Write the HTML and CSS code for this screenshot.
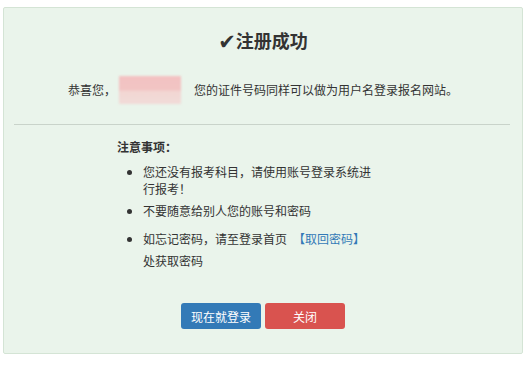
FILE: index.html
```html
<!DOCTYPE html>
<html lang="zh-CN">
<head>
    <meta charset="UTF-8">
    <meta name="viewport" content="width=device-width, initial-scale=1.0">
    <title>注册成功</title>
    <link rel="stylesheet" href="styles.css">
</head>
<body>
    <div class="panel">
        <h3 class="title"><span class="check">&#10004;</span>注册成功</h3>
        <p class="greet">
            恭喜您，<span class="name"></span>您的证件号码同样可以做为用户名登录报名网站。
        </p>
        <div class="line"></div>
        <div class="notes">
            <h4>注意事项：</h4>
            <ul>
                <li>您还没有报考科目，请使用账号登录系统进行报考！</li>
                <li>不要随意给别人您的账号和密码</li>
                <li class="last">如忘记密码，请至登录首页<a href="#" class="link">【取回密码】</a>处获取密码</li>
            </ul>
        </div>
        <div class="actions">
            <button class="btn blue">现在就登录</button>
            <button class="btn red">关闭</button>
        </div>
    </div>
</body>
</html>
```
FILE: styles.css
```css
body{
    margin:0;
    background:white;
    font-family:"Noto Sans CJK SC","DejaVu Sans",sans-serif;
    font-size:12px;
    color:#333;
}

.panel
{
    box-sizing:border-box;
    width:520px;
    height:347px;
    margin:7px 0 0 3px;
    background:#eaf4eb;
    border:1px solid #d4e4d5;
    border-radius:2px;
}

.title
{
    margin:20px 0 0;
    text-align:center;
    font-size:18px;
    line-height:24px;
    font-weight:bold;
    color:#333;
}

.check
{
    font-family:"DejaVu Sans",sans-serif;
    font-size:21px;
    vertical-align:-1px;
}

.greet
{
    margin:22px 0 0;
    text-align:center;
    line-height:28px;
    height:28px;
}

.name
{
    display:inline-block;
    vertical-align:top;
    width:62px;
    height:28px;
    margin:0 13px 0 3px;
    background:linear-gradient(#f3c2c2 0,#f2c5c4 50%,#f2d6d3 55%,#f1dcd8 100%);
    filter:blur(1px);
}

.line
{
    margin:20px 12px 0 10px;
    border-top:1px solid #c9d3ca;
}

.notes
{
    margin:13px 0 0 113px;
}

.notes h4
{
    margin:0;
    font-size:12px;
    line-height:17px;
    font-weight:bold;
}

.notes ul
{
    margin:8px 0 0;
    padding-left:26px;
    width:232px;
}

.notes li
{
    line-height:17px;
    margin-bottom:5px;
}

.notes li.last
{
    line-height:22px;
    margin-top:9px;
}

.link
{
    color:#337ab7;
    text-decoration:none;
    margin-left:6px;
}

.actions
{
    display:flex;
    justify-content:center;
    gap:4px;
    margin-top:31px;
}

.btn
{
    width:80px;
    height:26px;
    border:0;
    border-radius:3px;
    color:white;
    font-family:"Noto Sans CJK SC",sans-serif;
    font-size:12px;
    cursor:pointer;
}

.blue
{
    background:#337ab7;
}

.red
{
    background:#d9534f;
}
```
